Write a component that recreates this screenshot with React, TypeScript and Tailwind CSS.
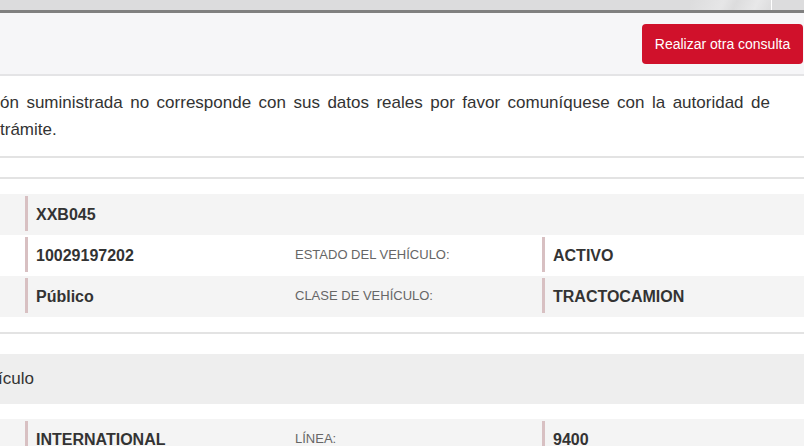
import React from "react"

interface Row {
    value: string
    label?: string
    extra?: string
}

const rows: Row[] = [
    { value: "XXB045" },
    { value: "10029197202", label: "ESTADO DEL VEHÍCULO:", extra: "ACTIVO" },
    { value: "Público", label: "CLASE DE VEHÍCULO:", extra: "TRACTOCAMION" },
]

function DataRow({ row, shaded }: { row: Row; shaded: boolean }) {
    return (
        <div className={`h-[41px] flex items-start pt-[2px] pl-[25px] ${shaded ? "bg-[#f4f4f4]" : "bg-white"}`}>
            <div className="w-[270px] h-[35px] flex items-center pt-[3px] border-l-[3px] border-[#d8c0c2] pl-[8px] text-[16px] font-bold text-[#333]">
                {row.value}
            </div>
            <div className="w-[247px] h-[35px] flex items-center pt-[1px] text-[13px] text-[#666]">
                {row.label}
            </div>
            {row.extra && (
                <div className="flex-1 h-[35px] flex items-center pt-[3px] border-l-[3px] border-[#d8c0c2] pl-[8px] text-[16px] font-bold text-[#333]">
                    {row.extra}
                </div>
            )}
        </div>
    )
}

export default function App() {
    return (
        <div className="w-[804px] h-[446px] overflow-hidden bg-white text-[#333] font-['Liberation_Sans',Arial,sans-serif]">
            <div className="relative h-[10px] bg-[#dcdcdd] overflow-hidden">
                <div className="absolute left-[690px] top-0 w-[81px] h-[10px] bg-[linear-gradient(115deg,#dcdcdd_0%,#e6e6e7_40%,#dcdcdd_55%,#e8e8e9_80%,#dcdcdd_100%)]" />
                <div className="absolute left-[771px] top-0 w-[1px] h-[10px] bg-white" />
            </div>
            <div className="h-[3px] bg-[#808080]" />

            <div className="h-[63px] bg-[#f6f6f8] border-b-2 border-[#e4e4e6] flex items-start justify-end pt-[11px] pr-[1px]">
                <button className="w-[161px] h-[40px] rounded-[4px] bg-[#d0112b] text-white text-[14px]">
                    Realizar otra consulta
                </button>
            </div>

            <div className="pt-[13px] text-[17px] leading-[27px] text-[#333] whitespace-nowrap">
                <p className="[word-spacing:2.75px]">ón suministrada no corresponde con sus datos reales por favor comuníquese con la autoridad de</p>
                <p>trámite.</p>
            </div>

            <div className="mt-[13px] border-t-2 border-[#e3e3e3]" />
            <div className="mt-[19px] border-t-2 border-[#e3e3e3]" />

            <div className="mt-[15px]">
                {rows.map((row, i) => (
                    <DataRow key={i} row={row} shaded={i % 2 === 0} />
                ))}
            </div>

            <div className="mt-[15px] border-t-2 border-[#e3e3e3]" />

            <div className="mt-[20px] h-[50px] bg-[#eeeeee] flex items-center text-[17px] text-[#333] -ml-[2px]">
                ículo
            </div>

            <div className="mt-[15px]">
                <DataRow row={{ value: "INTERNATIONAL", label: "LÍNEA:", extra: "9400" }} shaded />
            </div>
        </div>
    )
}
